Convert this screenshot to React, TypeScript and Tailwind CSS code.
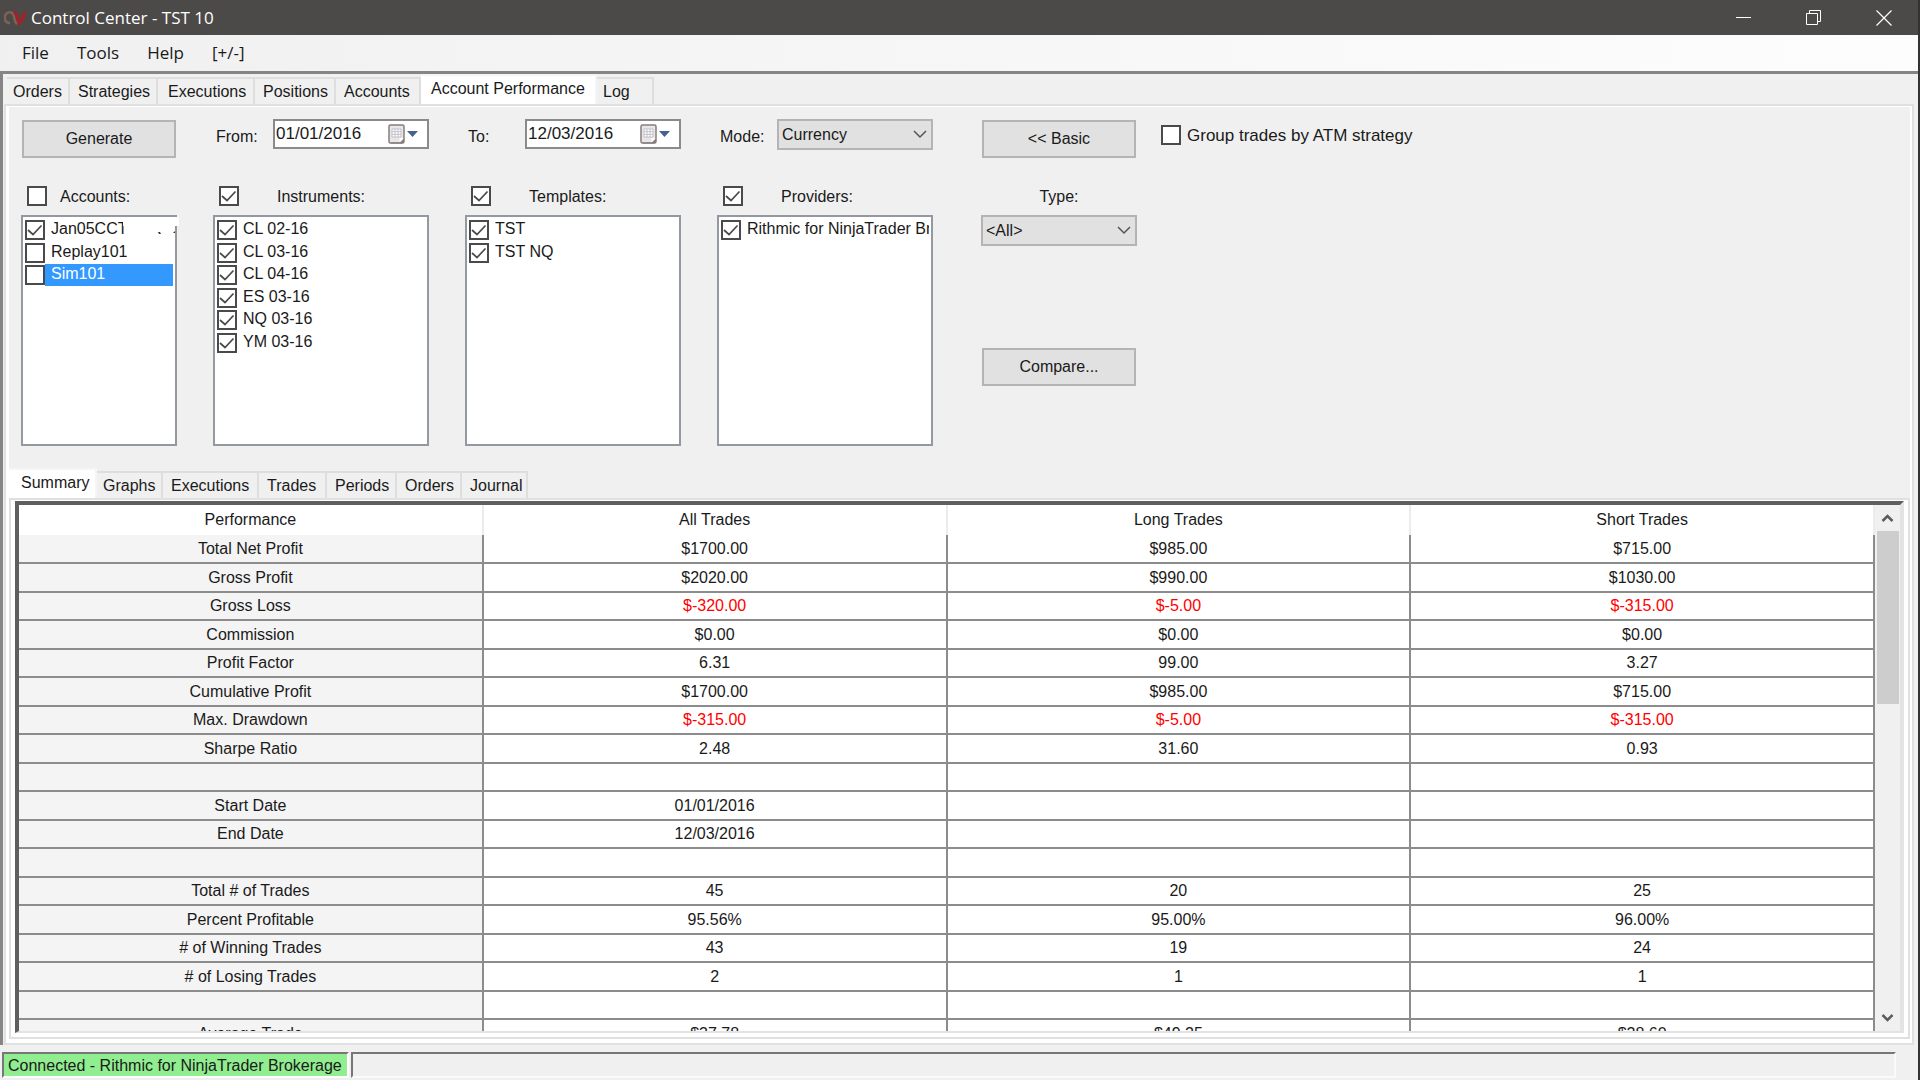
import { useState } from 'react'
import clsx from 'clsx'

type Item = { name: string; checked: boolean; selected?: boolean; redacted?: boolean }

const mainTabs = [
  { name: 'Orders', cls: 'w-[63px] pl-1.5' },
  { name: 'Strategies', cls: 'w-[88px] pl-2' },
  { name: 'Executions', cls: 'w-[97px] pl-2.5' },
  { name: 'Positions', cls: 'w-[81px] pl-2' },
  { name: 'Accounts', cls: 'w-[85px] pl-2' },
  { name: 'Account Performance', cls: 'w-[176px] pl-2.5' },
  { name: 'Log', cls: 'w-[57px] pl-1.5' },
]

const subTabs = [
  { name: 'Summary', cls: 'w-[88px] pl-3' },
  { name: 'Graphs', cls: 'w-[66px] pl-1.5' },
  { name: 'Executions', cls: 'w-[96px] pl-2' },
  { name: 'Trades', cls: 'w-[68px] pl-2' },
  { name: 'Periods', cls: 'w-[70px] pl-2' },
  { name: 'Orders', cls: 'w-[65px] pl-2' },
  { name: 'Journal', cls: 'w-[66px] pl-2' },
]

const accounts: Item[] = [
  { name: 'Jan05CCT', checked: true, redacted: true },
  { name: 'Replay101', checked: false },
  { name: 'Sim101', checked: false, selected: true },
]

const instruments: Item[] = ['CL 02-16', 'CL 03-16', 'CL 04-16', 'ES 03-16', 'NQ 03-16', 'YM 03-16'].map(
  (name) => ({ name, checked: true })
)

const templates: Item[] = [
  { name: 'TST', checked: true },
  { name: 'TST NQ', checked: true },
]

const providers: Item[] = [{ name: 'Rithmic for NinjaTrader Brokerage', checked: true }]

const rows: string[][] = [
  ['Total Net Profit', '$1700.00', '$985.00', '$715.00'],
  ['Gross Profit', '$2020.00', '$990.00', '$1030.00'],
  ['Gross Loss', '$-320.00', '$-5.00', '$-315.00'],
  ['Commission', '$0.00', '$0.00', '$0.00'],
  ['Profit Factor', '6.31', '99.00', '3.27'],
  ['Cumulative Profit', '$1700.00', '$985.00', '$715.00'],
  ['Max. Drawdown', '$-315.00', '$-5.00', '$-315.00'],
  ['Sharpe Ratio', '2.48', '31.60', '0.93'],
  ['', '', '', ''],
  ['Start Date', '01/01/2016', '', ''],
  ['End Date', '12/03/2016', '', ''],
  ['', '', '', ''],
  ['Total # of Trades', '45', '20', '25'],
  ['Percent Profitable', '95.56%', '95.00%', '96.00%'],
  ['# of Winning Trades', '43', '19', '24'],
  ['# of Losing Trades', '2', '1', '1'],
  ['', '', '', ''],
  ['Average Trade', '$37.78', '$49.25', '$28.60'],
]

function Logo() {
  return (
    <svg width="22" height="18" viewBox="0 0 22 18" fill="none">
      <path d="M6 14C2 14 0 11 1 7c1-4 6-5 8-2 2 4 1 8 4 10" stroke="#7d6257" strokeWidth="2.500" />
      <path d="M10 3c3 1 3 5 4 8l1 3c3-2 5-6 5-11" stroke="#a81f24" strokeWidth="3" />
    </svg>
  )
}

function CheckBox({ label, checked, id }: { label: string; checked?: boolean; id?: string }) {
  return (
    <span className="relative block size-5 shrink-0">
      <input
        id={id}
        type="checkbox"
        aria-label={label}
        defaultChecked={checked}
        className="peer block size-5 appearance-none border-2 border-[#4a4a4a] bg-white"
      />
      <svg
        className="pointer-events-none absolute inset-0 hidden peer-checked:block"
        width="20"
        height="20"
        viewBox="0 0 20 20"
        fill="none"
      >
        <path d="M3 10l5 4.500 8.500-9" stroke="#4a4a4a" strokeWidth="1.700" />
      </svg>
    </span>
  )
}

function Chevron() {
  return (
    <svg
      className="pointer-events-none absolute right-1.5 top-2.5"
      width="14"
      height="10"
      viewBox="0 0 14 10"
      fill="none"
    >
      <path d="M1 2l6 6 6-6" stroke="#555" strokeWidth="1.500" />
    </svg>
  )
}

function PushButton({ children }: { children: string }) {
  return (
    <button className="mx-px h-[38px] border-2 border-[#b4b4b4] bg-[#e1e1e1] text-center leading-5">{children}</button>
  )
}

function Dropdown({ label, options }: { label: string; options: string[] }) {
  return (
    <div className="relative h-[31px] w-[156px]">
      <select
        aria-label={label}
        className="block h-full w-full appearance-none border-2 border-[#b4b4b4] bg-[#e1e1e1] pl-[3px] pt-px leading-5"
      >
        {options.map((o) => (
          <option key={o}>{o}</option>
        ))}
      </select>
      <Chevron />
    </div>
  )
}

function DatePicker({ id, value }: { id: string; value: string }) {
  return (
    <div className="flex h-[30px] w-[156px] items-center border-2 border-[#8a8a8a] bg-white pl-px">
      <input id={id} defaultValue={value} className="h-full w-[111px] bg-transparent text-[17px] outline-none" />
      <button aria-label="Open calendar" className="flex items-center">
        <svg width="32" height="22" viewBox="0 0 32 22">
          <rect x="2" y="2" width="15" height="18" rx="1.500" fill="#e9e6e6" stroke="#857d7d" strokeWidth="1.500" />
          <path d="M4 19.500h9l4-4v3l-2 2H4z" fill="#857d7d" />
          <path d="M12.500 19v-4h4z" fill="#fff" />
          <path d="M5 6h9v8H5z" fill="#fff" />
          <path d="M5 6h9M5 8.700h9M5 11.400h9M5 14h9M5 6v8M8 6v8M11 6v8M14 6v8" stroke="#b5b5c2" strokeWidth="0.800" />
          <path d="M20 8h11l-5.500 6z" fill="#44618f" />
        </svg>
      </button>
    </div>
  )
}

function CheckList({ title, items, allChecked }: { title: string; items: Item[]; allChecked: boolean }) {
  return (
    <>
      <div className="flex h-5 items-center pl-1.5">
        <CheckBox label={`All ${title}`} checked={allChecked} />
        <span className={clsx('pt-0.5 leading-5', title === 'Accounts:' ? 'pl-[13px]' : 'pl-[38px]')}>{title}</span>
      </div>
      <ul className="relative mt-[9px] h-[231px] border-2 border-[#9499a1] bg-white pl-0.5 pt-[3px]">
        {items.map((item) => (
          <li key={item.name} className="mb-0.5 flex h-5 items-center odd:mb-[3px]">
            <CheckBox label={item.name} checked={item.checked} />
            <span
              className={clsx(
                'mr-0.5 h-[22px] flex-1 overflow-hidden whitespace-nowrap pl-1.5 leading-5',
                item.selected && 'bg-[#3399ff] text-white',
                item.redacted && 'mr-[50px]'
              )}
            >
              {item.name}
            </span>
            {item.redacted && (
              <svg className="absolute -right-1 top-0" width="56" height="20" viewBox="0 0 56 20">
                <path d="M0 0h56v9H0z" fill="#fff" />
                <path d="M35 15h2l1 2h-2zM50 16l2-2v2z" fill="#3b3020" />
              </svg>
            )}
          </li>
        ))}
      </ul>
    </>
  )
}

function TabStrip({
  tabs,
  active,
  onSelect,
}: {
  tabs: { name: string; cls: string }[]
  active: string
  onSelect: (name: string) => void
}) {
  return (
    <div className="flex h-[30px] items-end" role="tablist">
      {tabs.map((t) => (
        <button
          key={t.name}
          role="tab"
          aria-selected={t.name === active}
          onClick={() => onSelect(t.name)}
          className={clsx(
            'whitespace-nowrap border-r-2 border-t-2 text-left leading-5',
            t.cls,
            t.name === active ? 'h-[30px] border-[#f5f5f5] bg-white pb-0.5' : 'h-[27px] border-[#dedede]'
          )}
        >
          {t.name}
        </button>
      ))}
    </div>
  )
}

function SummaryTable() {
  return (
    <table className="w-full table-fixed border-collapse text-center">
      <thead>
        <tr className="h-[30px]">
          {['Performance', 'All Trades', 'Long Trades', 'Short Trades'].map((h) => (
            <th key={h} className="border-r-2 border-[#ececec] p-0 font-normal leading-5">
              {h}
            </th>
          ))}
        </tr>
      </thead>
      <tbody>
        {rows.map((row, i) => (
          <tr key={i} className="h-[28px] even:h-[29px]">
            {row.map((cell, j) => (
              <td
                key={j}
                className={clsx(
                  'border-b-2 border-r-2 border-[#8c8c8c] p-0 leading-5',
                  j === 0 && 'bg-[#f4f4f4]',
                  cell.startsWith('$-') && 'text-[#ff0000]'
                )}
              >
                {cell}
              </td>
            ))}
          </tr>
        ))}
      </tbody>
    </table>
  )
}

function ScrollBar() {
  return (
    <div className="flex w-[25px] flex-col items-center bg-[#f0f0f0]">
      <button aria-label="Scroll up" className="flex h-[26px] items-center">
        <svg width="13" height="10" viewBox="0 0 13 10" fill="none">
          <path d="M1.500 8l5-5 5 5" stroke="#5c5c5c" strokeWidth="2.500" />
        </svg>
      </button>
      <div className="h-[173px] w-[22px] bg-[#cdcdcd]" />
      <button aria-label="Scroll down" className="mt-auto flex h-[26px] items-center">
        <svg width="13" height="10" viewBox="0 0 13 10" fill="none">
          <path d="M1.500 2l5 5 5-5" stroke="#5c5c5c" strokeWidth="2.500" />
        </svg>
      </button>
    </div>
  )
}

export default function App() {
  const [tab, setTab] = useState('Account Performance')
  const [subTab, setSubTab] = useState('Summary')

  return (
    <div className="flex h-screen flex-col overflow-hidden border-r-2 border-[#333333] bg-[#f0f0f0] font-['Liberation_Sans',Arial,sans-serif] text-[16px] leading-5 text-[#1a1a1a]">
      {/* Title bar */}
      <header className="flex h-[35px] shrink-0 items-center bg-[#4c4a48] pl-1 font-['Open_Sans',sans-serif] text-white">
        <Logo />
        <h1 className="ml-[5px] flex-1 pt-px text-[17px] leading-6">Control Center - TST 10</h1>
        <div className="flex gap-[54px] pr-[26px]">
          <button aria-label="Minimize">
            <svg width="16" height="16" viewBox="0 0 16 16" fill="none" stroke="#fff">
              <path d="M0 7.500h15" />
            </svg>
          </button>
          <button aria-label="Restore">
            <svg width="16" height="16" viewBox="0 0 16 16" fill="none" stroke="#fff">
              <path d="M.5 3.500h11v11H.5zM3.500 3.500v-3h11v11h-3" />
            </svg>
          </button>
          <button aria-label="Close">
            <svg width="16" height="16" viewBox="0 0 16 16" fill="none" stroke="#fff" strokeWidth="1.200">
              <path d="M.5.5l15 15M15.500.5l-15 15" />
            </svg>
          </button>
        </div>
      </header>

      {/* Menu */}
      <nav className="flex h-9 shrink-0 items-center gap-7 bg-linear-to-r from-[#f0f0f0] to-[#fdfdfd] pl-[22px] font-['Open_Sans',sans-serif] text-[17px]">
        <button>File</button>
        <button>Tools</button>
        <button>Help</button>
        <button>[+/-]</button>
      </nav>

      <main className="flex min-h-0 flex-1 flex-col border-l-[3px] border-t-[3px] border-[#858585] pl-px pr-1">
        <div className="pl-[3px]">
          <TabStrip tabs={mainTabs} active={tab} onSelect={setTab} />
        </div>

        <section className="flex min-h-0 flex-1 flex-col border-2 border-[#e0e0e0] bg-white pb-1 pl-[3px] pr-0.5 pt-px">
          <div className="flex min-h-0 flex-1 flex-col bg-[#f0f0f0]">
            {/* Filters */}
            <div className="flex h-[361px] shrink-0 gap-9 pl-3 pt-3">
              <div className="flex w-[156px] flex-col">
                <div className="mb-[27px] flex h-10 flex-col pt-px">
                  <PushButton>Generate</PushButton>
                </div>
                <CheckList title="Accounts:" items={accounts} allChecked={false} />
              </div>
              <div className="w-[216px]">
                <div className="mb-[27px] flex h-10 justify-between pl-[3px]">
                  <label htmlFor="from" className="pt-2">From:</label>
                  <DatePicker id="from" value="01/01/2016" />
                </div>
                <CheckList title="Instruments:" items={instruments} allChecked />
              </div>
              <div className="w-[216px]">
                <div className="mb-[27px] flex h-10 justify-between pl-[3px]">
                  <label htmlFor="to" className="pt-2">To:</label>
                  <DatePicker id="to" value="12/03/2016" />
                </div>
                <CheckList title="Templates:" items={templates} allChecked />
              </div>
              <div className="w-[216px]">
                <div className="mb-[27px] flex h-10 justify-between pl-[3px]">
                  <span className="pt-2">Mode:</span>
                  <Dropdown label="Mode" options={['Currency', 'Percent', 'Points']} />
                </div>
                <CheckList title="Providers:" items={providers} allChecked />
              </div>
              <div className="ml-3 flex w-[156px] flex-col">
                <div className="mb-7 flex h-10 flex-col pt-px">
                  <PushButton>{'<< Basic'}</PushButton>
                </div>
                <span className="mb-2 text-center">Type:</span>
                <Dropdown label="Type" options={['<All>']} />
                <div className="mt-[102px] flex flex-col">
                  <PushButton>Compare...</PushButton>
                </div>
              </div>
              <div className="-ml-3 flex h-8 items-center gap-1.5">
                <CheckBox id="group" label="Group trades by ATM strategy" />
                <label htmlFor="group" className="pt-px text-[17px]">Group trades by ATM strategy</label>
              </div>
            </div>

            <TabStrip tabs={subTabs} active={subTab} onSelect={setSubTab} />

            {/* Results */}
            <div className="flex min-h-0 flex-1 flex-col border-2 border-[#e0e0e0] bg-white p-1 pt-px">
              <div className="flex min-h-0 flex-1 border-4 border-b-2 border-l-[#5f5f5f] border-t-[#5f5f5f] border-b-[#e3e3e3] border-r-[#e3e3e3]">
                <div className="min-w-0 flex-1 overflow-hidden">
                  <SummaryTable />
                </div>
                <ScrollBar />
              </div>
            </div>
          </div>
        </section>
      </main>

      {/* Status bar */}
      <footer className="mt-[7px] flex h-7 shrink-0 gap-0.5 pb-0.5 pl-0.5 pr-[22px]">
        <div className="w-[347px] border-2 border-b-white border-l-[#777] border-r-white border-t-[#777] bg-[#90ee90] pl-1 leading-6">
          Connected - Rithmic for NinjaTrader Brokerage
        </div>
        <div className="flex-1 border-2 border-b-[#fafafa] border-l-[#777] border-r-[#fafafa] border-t-[#777]" />
      </footer>
    </div>
  )
}
